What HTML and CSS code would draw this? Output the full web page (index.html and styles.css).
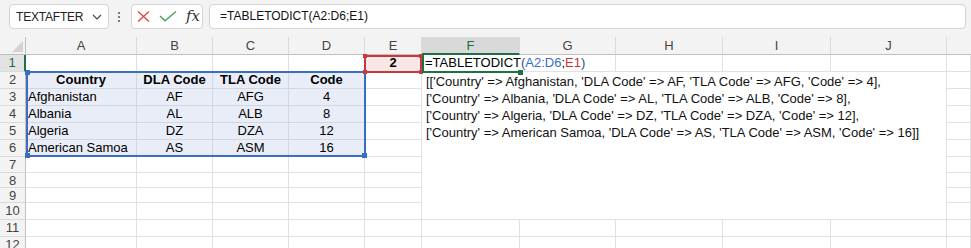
FILE: index.html
```html
<!DOCTYPE html>
<html>
<head>
<meta charset="utf-8">
<link rel="stylesheet" href="styles.css">
</head>
<body>
<div class="app">
  <div class="toolbar">
    <div class="namebox">
      <span class="name">TEXTAFTER</span>
      <svg class="chev" width="10" height="6" viewBox="0 0 10 6"><polyline points="1,1 5,5 9,1" fill="none" stroke="#444" stroke-width="1.1"/></svg>
    </div>
    <div class="dots"><i></i><i></i><i></i></div>
    <div class="actions">
      <svg width="13" height="11" viewBox="0 0 13 11"><path d="M1 0.5 L12 10.5 M12 0.5 L1 10.5" stroke="#e2423c" stroke-width="1.3" fill="none"/></svg>
      <svg width="18" height="11" viewBox="0 0 18 11"><polyline points="1,5 6,9.8 17,0.6" fill="none" stroke="#3fa35c" stroke-width="1.3"/></svg>
      <span class="fx">fx</span>
    </div>
    <div class="formula">=TABLETODICT(A2:D6;E1)</div>
  </div>

  <div class="sheet">
    <!-- header row -->
    <div class="corner"><svg width="11" height="11" viewBox="0 0 11 11"><polygon points="11,0 11,11 0,11" fill="#d3d3d3"/></svg></div>
    <div class="ch">A</div><div class="ch">B</div><div class="ch">C</div><div class="ch">D</div><div class="ch">E</div><div class="ch sel">F</div><div class="ch">G</div><div class="ch">H</div><div class="ch">I</div><div class="ch">J</div><div class="ch last"></div>

    <!-- row 1 -->
    <div class="rh selr">1</div><div class="c"></div><div class="c"></div><div class="c"></div><div class="c"></div><div class="c e1">2</div><div class="c f1"><span>=TABLETODICT<span class="par">(</span><span class="rb">A2:D6</span>;<span class="rr">E1</span><span class="par">)</span></span></div><div class="c"></div><div class="c"></div><div class="c"></div><div class="c"></div><div class="c"></div>

    <!-- merged result F2:J10 -->
    <div class="merged">[['Country' =&gt; Afghanistan, 'DLA Code' =&gt; AF, 'TLA Code' =&gt; AFG, 'Code' =&gt; 4],<br>['Country' =&gt; Albania, 'DLA Code' =&gt; AL, 'TLA Code' =&gt; ALB, 'Code' =&gt; 8],<br>['Country' =&gt; Algeria, 'DLA Code' =&gt; DZ, 'TLA Code' =&gt; DZA, 'Code' =&gt; 12],<br>['Country' =&gt; American Samoa, 'DLA Code' =&gt; AS, 'TLA Code' =&gt; ASM, 'Code' =&gt; 16]]</div>

    <!-- row 2 -->
    <div class="rh">2</div><div class="c t hd">Country</div><div class="c t hd">DLA Code</div><div class="c t hd">TLA Code</div><div class="c t hd">Code</div><div class="c"></div><div class="c"></div>
    <!-- row 3 -->
    <div class="rh">3</div><div class="c t">Afghanistan</div><div class="c t ctr">AF</div><div class="c t ctr">AFG</div><div class="c t ctr">4</div><div class="c"></div><div class="c"></div>
    <!-- row 4 -->
    <div class="rh">4</div><div class="c t">Albania</div><div class="c t ctr">AL</div><div class="c t ctr">ALB</div><div class="c t ctr">8</div><div class="c"></div><div class="c"></div>
    <!-- row 5 -->
    <div class="rh">5</div><div class="c t">Algeria</div><div class="c t ctr">DZ</div><div class="c t ctr">DZA</div><div class="c t ctr">12</div><div class="c"></div><div class="c"></div>
    <!-- row 6 -->
    <div class="rh">6</div><div class="c t">American Samoa</div><div class="c t ctr">AS</div><div class="c t ctr">ASM</div><div class="c t ctr">16</div><div class="c"></div><div class="c"></div>
    <!-- row 7 -->
    <div class="rh">7</div><div class="c"></div><div class="c"></div><div class="c"></div><div class="c"></div><div class="c"></div><div class="c"></div>
    <!-- row 8 -->
    <div class="rh">8</div><div class="c"></div><div class="c"></div><div class="c"></div><div class="c"></div><div class="c"></div><div class="c"></div>
    <!-- row 9 -->
    <div class="rh">9</div><div class="c"></div><div class="c"></div><div class="c"></div><div class="c"></div><div class="c"></div><div class="c"></div>
    <!-- row 10 -->
    <div class="rh">10</div><div class="c"></div><div class="c"></div><div class="c"></div><div class="c"></div><div class="c"></div><div class="c"></div>
    <!-- row 11 -->
    <div class="rh">11</div><div class="c"></div><div class="c"></div><div class="c"></div><div class="c"></div><div class="c"></div><div class="c"></div><div class="c"></div><div class="c"></div><div class="c"></div><div class="c"></div><div class="c"></div>
    <!-- row 12 -->
    <div class="rh">12</div><div class="c"></div><div class="c"></div><div class="c"></div><div class="c"></div><div class="c"></div><div class="c"></div><div class="c"></div><div class="c"></div><div class="c"></div><div class="c"></div><div class="c"></div>

    <!-- overlays -->
    <div class="ref-blue"><i class="hd1 tl"></i><i class="hd1 bl"></i><i class="hd1 br"></i></div>
    <div class="ref-red"><i class="hd2 tl"></i><i class="hd2 tr"></i><i class="hd2 bl"></i><i class="hd2 br"></i></div>
    <div class="active"><i class="hd3"></i></div>
  </div>
</div>
</body>
</html>
```
FILE: styles.css
```css
html, body {
  margin: 0;
  padding: 0;
  background: #f3f3f3;
  width: 971px;
  height: 248px;
  overflow: hidden;
}
.app {
  font-family: "Liberation Sans", Arial, sans-serif;
  color: #000;
}
.toolbar {
  height: 37px;
  box-sizing: border-box;
  padding: 4px 5px 0 9px;
  display: flex;
  align-items: flex-start;
  background: #f3f3f3;
}
.namebox {
  width: 100px;
  height: 25px;
  box-sizing: border-box;
  background: #fff;
  border: 1px solid #d4d4d4;
  border-radius: 4px;
  display: flex;
  align-items: center;
  padding: 0 6px 0 6px;
  justify-content: space-between;
}
.name {
  font-size: 12px;
  color: #222;
  letter-spacing: -0.2px;
}
.chev { margin-top: 1px; }
.dots {
  width: 4px;
  margin: 0 10px 0 8px;
  height: 25px;
  display: flex;
  flex-direction: column;
  align-items: center;
  justify-content: center;
  gap: 2px;
}
.dots i {
  display: block;
  width: 2px;
  height: 2px;
  background: #555;
  border-radius: 1px;
}
.actions {
  width: 72px;
  height: 25px;
  box-sizing: border-box;
  background: #fff;
  border: 1px solid #d4d4d4;
  border-radius: 4px;
  display: flex;
  align-items: center;
  padding: 0 0 0 5px;
  gap: 9px;
}
.fx {
  font-family: "DejaVu Serif", "Liberation Serif", serif;
  font-style: italic;
  font-size: 15px;
  color: #333;
  margin-left: 0px;
  margin-top: -2px;
}
.formula {
  flex: 1;
  margin-left: 6px;
  height: 25px;
  box-sizing: border-box;
  background: #fff;
  border: 1px solid #d4d4d4;
  border-radius: 4px;
  font-size: 12px;
  line-height: 23px;
  padding-left: 10px;
  color: #111;
}

.sheet {
  position: relative;
  display: grid;
  grid-template-columns: 26px 111px 76px 76px 76px 57px 98px 96px 107px 108px 116px 1fr;
  grid-template-rows: 18px 17px 17px 17px 17px 17px 17px 16px 15px 15px 17px 17px 17px;
  background: #fff;
  font-size: 13px;
}
.sheet > div {
  box-sizing: border-box;
}
.corner {
  background: #f3f3f3;
  border-right: 1px solid #bfbfbf;
  border-bottom: 1px solid #bfbfbf;
  display: flex;
  align-items: flex-end;
  justify-content: flex-end;
  padding: 0 2px 2px 0;
}
.ch {
  background: #f3f3f3;
  border-right: 1px solid #dadada;
  border-bottom: 1px solid #bfbfbf;
  text-align: center;
  line-height: 17px;
  color: #444;
  font-size: 13px;
}
.ch.sel {
  background: #d9d9d9;
  color: #1d6b3f;
  border-bottom: 2px solid #1e7145;
  line-height: 17px;
}
.ch.last { border-right: none; }
.rh {
  background: #f3f3f3;
  border-right: 1px solid #bfbfbf;
  border-bottom: 1px solid #dadada;
  text-align: center;
  line-height: 16px;
  color: #444;
  font-size: 13px;
  overflow: hidden;
}
.rh.selr {
  background: #e3e3e3;
  color: #1d6b3f;
  border-right: 2px solid #1e7145;
}
.c {
  border-right: 1px solid #e1e1e1;
  border-bottom: 1px solid #e1e1e1;
  line-height: 16px;
  padding: 0 2px;
  white-space: nowrap;
  overflow: visible;
}
.c.t {
  background: #e9edf7;
  border-right-color: #d3d7df;
  border-bottom-color: #d3d7df;
}
.c.hd {
  font-weight: bold;
  text-align: center;
}
.c.ctr { text-align: center; }
.e1 {
  background: #f9e6e7;
  font-weight: bold;
  text-align: center;
}
.f1 {
  position: relative;
  z-index: 2;
  padding-left: 3px;
}
.f1 > span {
  background: #fff;
}
.rb { color: #3a6cc4; }
.rr { color: #cc3236; }
.par { color: #34507e; }
.merged {
  grid-column: 7 / 12;
  grid-row: 3 / 12;
  background: #fff;
  border-right: 1px solid #e1e1e1;
  border-bottom: 1px solid #e1e1e1;
  padding: 1px 0 0 4px;
  line-height: 17px;
  white-space: nowrap;
  color: #111;
}

.ref-blue {
  position: absolute;
  grid-column: 2 / 6;
  grid-row: 3 / 8;
  top: -1px;
  left: 0;
  right: -1px;
  bottom: 0;
  border: 2px solid #3b6dc4;
  z-index: 3;
}
.ref-red {
  position: absolute;
  grid-column: 6 / 7;
  grid-row: 2 / 3;
  top: 0;
  left: -1px;
  right: 0;
  bottom: -1px;
  border: 2px solid #c63a3f;
  z-index: 4;
}
.active {
  position: absolute;
  grid-column: 7 / 8;
  grid-row: 2 / 3;
  top: 0;
  left: 0;
  right: 0;
  bottom: -1px;
  border-left: 2px solid #1e7145;
  border-bottom: 2px solid #1e7145;
  z-index: 5;
}
.hd1, .hd2, .hd3 {
  position: absolute;
  width: 5px;
  height: 5px;
  display: block;
}
.hd1 { background: #3b6dc4; }
.hd2 { background: #c63a3f; width: 4px; height: 4px; }
.hd3 { background: #1e7145; right: -3px; bottom: -4px; }
.hd1.tl { left: -3px; top: -3px; }
.hd1.bl { left: -3px; bottom: -3px; }
.hd1.br { right: -3px; bottom: -3px; }
.hd2.tl { left: -3px; top: -3px; }
.hd2.tr { right: -3px; top: -3px; }
.hd2.bl { left: -3px; bottom: -3px; }
.hd2.br { right: -3px; bottom: -3px; }
```
